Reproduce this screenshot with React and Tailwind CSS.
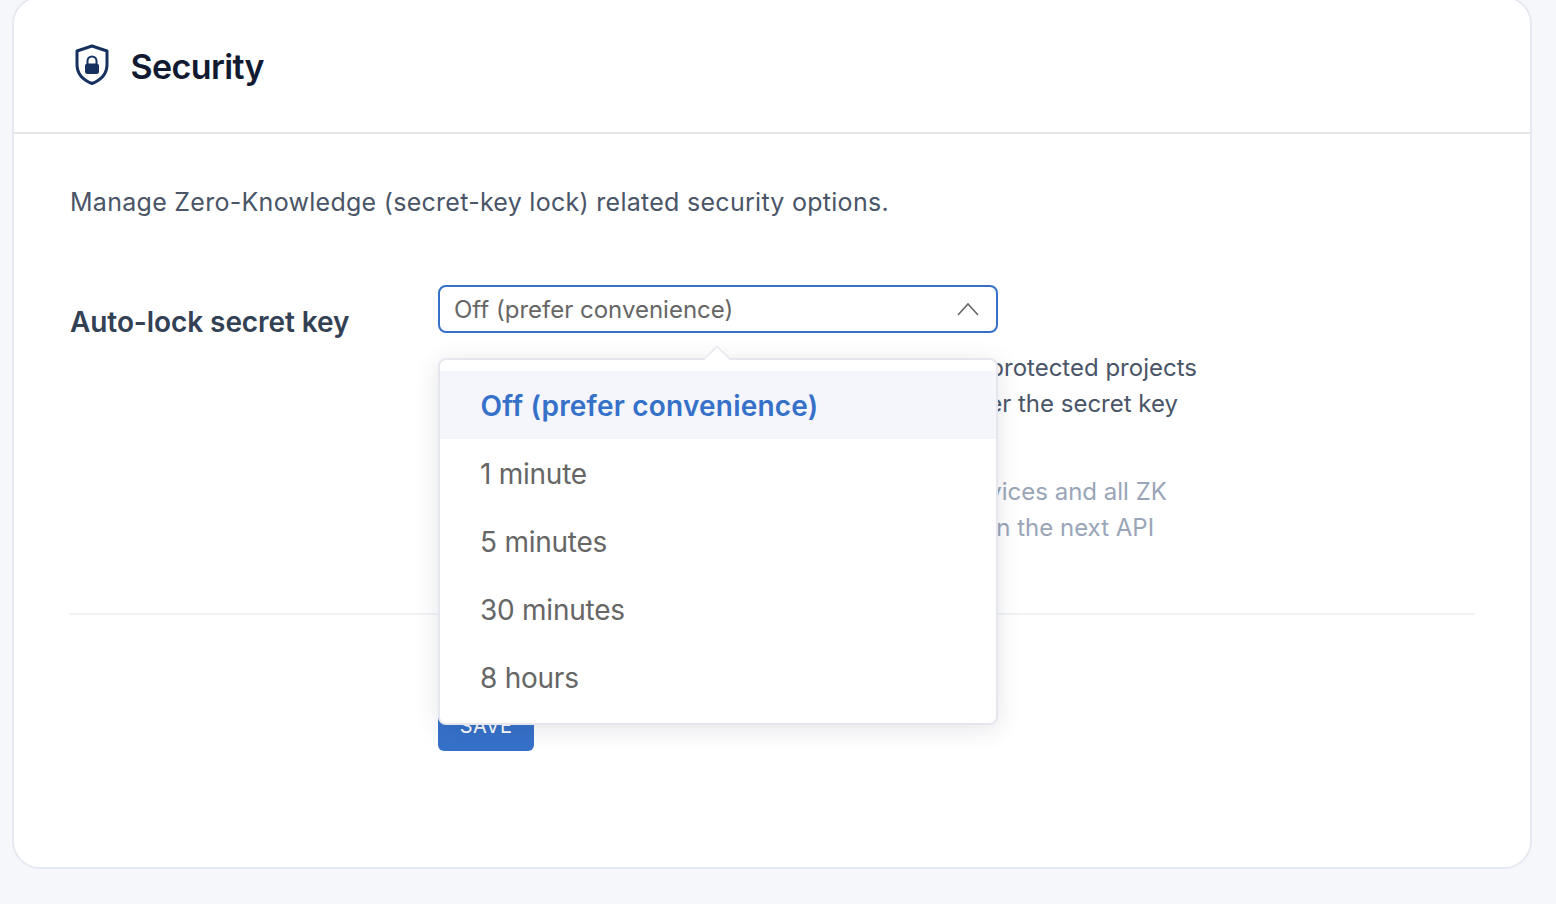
import React from "react";

const items = ["1 minute", "5 minutes", "30 minutes", "8 hours"];

function ShieldLock() {
  return (
    <svg width="36" height="42" viewBox="0 0 36 42" fill="none" className="mb-[4px]">
      <path d="M17 2 L32 7 V20.5 C32 29.5 26 36 17 39.5 C8 36 2 29.5 2 20.5 V7 Z" stroke="#16305f" strokeWidth="3" strokeLinejoin="round" />
      <path d="M12.5 21 V17 A4.5 4.5 0 0 1 21.5 17 V21" stroke="#16305f" strokeWidth="2" />
      <rect x="10" y="19.5" width="14" height="10.5" rx="2.5" fill="#16305f" />
    </svg>
  );
}

export default function App() {
  return (
    <div className="h-[904px] overflow-hidden bg-[#f5f7fb] pl-3 pr-6 font-['Inter','Liberation_Sans',sans-serif]">
      <div className="mt-[-4px] h-[873px] rounded-[28px] border-2 border-[#e5e9f0] bg-white">
        <div className="flex h-[136px] items-center gap-[19.5px] border-b-2 border-[#e2e5ea] pl-[61px] pt-[4px]">
          <ShieldLock />
          <h1 className="text-[34px] font-semibold leading-none tracking-[-0.6px] text-[#111a30]">Security</h1>
        </div>
        <div className="pl-[56px] pr-[55px]">
          <p className="mt-[50px] text-[25px] leading-[36px] tracking-[0.28px] text-[#4a5568]">
            Manage Zero-Knowledge (secret-key lock) related security options.
          </p>
          <div className="mt-[65px] flex">
            <label className="mt-[17px] w-[368px] shrink-0 text-[28px] font-semibold leading-[40px] tracking-[-0.08px] text-[#334155]">Auto-lock secret key</label>
            <div className="relative w-[560px] shrink-0">
              <div className="flex h-[48px] items-center justify-between rounded-lg border-2 border-[#3671c9] bg-white pl-[14px] pr-[17px] pt-[1px] text-[24px] text-[#666666]">
                <span>Off (prefer convenience)</span>
                <svg width="22" height="14" viewBox="0 0 22 14" fill="none" className="mb-[2px]"><path d="M1 13 L11 2 L21 13" stroke="#666666" strokeWidth="1.6" /></svg>
              </div>
              <div className="mt-[17px] w-[800px] whitespace-nowrap text-[24px] leading-[36px] text-[#4a5568]">
                <p className="pl-[45px]">Automatically lock the secret key of your ZK protected projects</p>
                <p className="pl-[46px]">after this period; you will then need to re-enter the secret key</p>
                <div className="mt-[52px] text-[#9aa5b8]">
                  <p className="pl-[65px]">This setting applies to all of your team's devices and all ZK</p>
                  <p className="pl-[82px]">protected projects, and it will take effect on the next API</p>
                </div>
              </div>

              <div className="absolute left-0 top-[73px] z-10 h-[367px] w-[560px] rounded-lg border-2 border-[#e6e6ee] bg-white pt-[11px] shadow-[0_4px_24px_rgba(30,40,70,0.12)]">
                <div className="absolute left-[267px] top-[-11px] h-[20px] w-[20px] rotate-45 rounded-[2px] border-l-2 border-t-2 border-[#e9e9f0] bg-white" />
                <div className="relative flex h-[68px] items-center bg-[#f5f6fb] pl-[40.5px] pt-[1px] text-[28px] font-semibold tracking-[0.2px] text-[#3671c9]">Off (prefer convenience)</div>
                {items.map((t) => (
                  <div key={t} className="flex h-[68px] items-center pl-[40px] pt-[1px] text-[28px] tracking-[-0.25px] text-[#666666]">{t}</div>
                ))}
              </div>
            </div>
          </div>
        </div>
        <div className="mx-[55px] mt-[67px] border-t-2 border-[#f1f3f6]" />
        <div className="ml-[424px] mt-[88px]">
          <button className="h-[48px] w-[96px] rounded-md bg-[#3671c9] pb-[2px] text-[20px] font-normal tracking-[0.4px] text-white">SAVE</button>
        </div>
      </div>
    </div>
  );
}
